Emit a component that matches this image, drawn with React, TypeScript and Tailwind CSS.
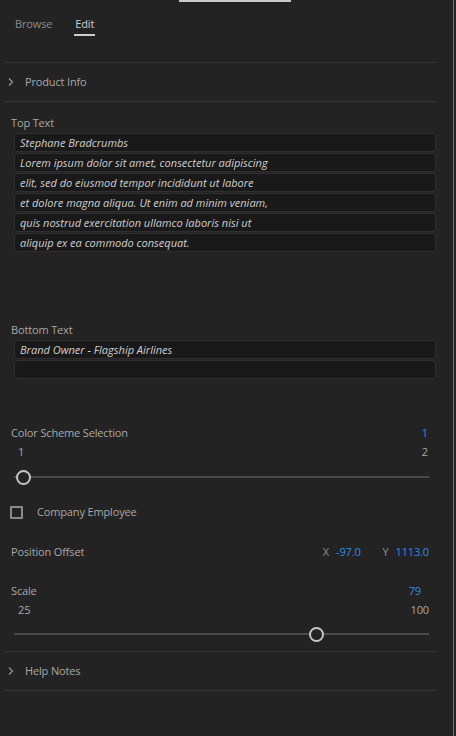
import React from 'react'

const TOP_LINES = [
  'Stephane Bradcrumbs',
  'Lorem ipsum dolor sit amet, consectetur adipiscing',
  'elit, sed do eiusmod tempor incididunt ut labore',
  'et dolore magna aliqua. Ut enim ad minim veniam,',
  'quis nostrud exercitation ullamco laboris nisi ut',
  'aliquip ex ea commodo consequat.',
]

const BOTTOM_LINES = ['Brand Owner - Flagship Airlines', '']

function Chevron() {
  return (
    <svg width="6" height="10" viewBox="0 0 6 10" className="shrink-0">
      <path d="M1 1.5 L4.5 5 L1 8.5" stroke="#9a9a9a" strokeWidth="1.1" fill="none" />
    </svg>
  )
}

function Section({ title }: { title: string }) {
  return (
    <div className="flex items-center h-[38px] pl-[8px] gap-[11px] text-[#a8a8a8]">
      <Chevron />
      <span>{title}</span>
    </div>
  )
}

function LineBox({ text }: { text: string }) {
  return (
    <div className="h-[19px] bg-[#191919] border border-[#2f2f2f] rounded-[3px] pl-[5px] flex items-center text-[11px] tracking-normal italic text-[#cfcfcf] leading-none">
      {text}
    </div>
  )
}

function Slider({ pct }: { pct: number }) {
  return (
    <div className="relative h-[18px] ml-[14px] mr-[27px] flex items-center">
      <div className="h-[2px] w-full bg-[#4a4a4a]" />
      <div
        className="absolute top-1/2 w-[15px] h-[15px] -mt-[7.5px] -ml-[7.5px] rounded-full border-[2px] border-[#c4c4c4] bg-[#232323]"
        style={{ left: `${pct}%` }}
      />
    </div>
  )
}

export default function App() {
  return (
    <div
      className="relative w-[456px] h-[736px] bg-[#232323] overflow-hidden text-[#a8a8a8] text-[11px] tracking-[-0.15px]"
      style={{ fontFamily: '"Open Sans", "Noto Sans", sans-serif' }}
    >
      <div className="absolute top-0 left-[179px] w-[112px] h-[2px] bg-[#c8c8c8]" />
      <div className="absolute top-0 right-[2px] w-[1px] h-full bg-[#3d7fd6]" />

      {/* tabs */}
      <div className="flex gap-[23px] pl-[15px] pt-[16px] h-[62px] leading-[16px]">
        <span className="text-[#8c8c8c]">Browse</span>
        <div className="flex flex-col">
          <span className="text-[#cfcfcf]">Edit</span>
          <div className="h-[2px] bg-[#cfcfcf] mt-[2px] -mx-[1px]" />
        </div>
      </div>

      <div className="ml-[4px] mr-[19px] border-t border-[#333333]" />
      <Section title="Product Info" />
      <div className="ml-[4px] mr-[19px] border-t border-[#333333]" />

      {/* top text */}
      <div className="pl-[11px] pt-[13px] leading-[16px]">Top Text</div>
      <div className="flex flex-col gap-[1px] ml-[14px] mr-[20px] mt-[2px]">
        {TOP_LINES.map((l, i) => (
          <LineBox key={i} text={l} />
        ))}
      </div>

      {/* bottom text */}
      <div className="pl-[11px] pt-[70px] leading-[16px]">Bottom Text</div>
      <div className="flex flex-col gap-[1px] ml-[14px] mr-[20px] mt-[2px]">
        {BOTTOM_LINES.map((l, i) => (
          <LineBox key={i} text={l} />
        ))}
      </div>

      {/* color scheme */}
      <div className="flex justify-between pl-[11px] pr-[28px] pt-[46px] leading-[16px]">
        <span>Color Scheme Selection</span>
        <span className="text-[#2f8ae8]">1</span>
      </div>
      <div className="flex justify-between pl-[18px] pr-[28px] pt-[3px] leading-[16px]">
        <span>1</span>
        <span>2</span>
      </div>
      <div className="mt-[8px]">
        <Slider pct={2.2} />
      </div>

      {/* checkbox */}
      <div className="flex items-center gap-[14px] pl-[10px] mt-[18px] leading-[16px]">
        <div className="w-[13px] h-[13px] border-[2px] border-[#8a8a8a] rounded-[1px]" />
        <span>Company Employee</span>
      </div>

      {/* position */}
      <div className="flex items-center pl-[11px] pr-[27px] mt-[24px] leading-[16px]">
        <span className="flex-1">Position Offset</span>
        <span className="text-[#8c8c8c]">X</span>
        <span className="text-[#2f8ae8] ml-[7px]">-97.0</span>
        <span className="text-[#8c8c8c] ml-[22px]">Y</span>
        <span className="text-[#2f8ae8] ml-[7px]">1113.0</span>
      </div>

      {/* scale */}
      <div className="flex justify-between pl-[11px] pr-[27px] pt-[23px] leading-[16px]">
        <span>Scale</span>
        <span className="text-[#2f8ae8] pr-[8px]">79</span>
      </div>
      <div className="flex justify-between pl-[18px] pr-[27px] pt-[3px] leading-[16px]">
        <span>25</span>
        <span>100</span>
      </div>
      <div className="mt-[7px]">
        <Slider pct={72.8} />
      </div>

      <div className="ml-[4px] mr-[19px] mt-[8px] border-t border-[#333333]" />
      <Section title="Help Notes" />
      <div className="ml-[4px] mr-[19px] border-t border-[#333333]" />
    </div>
  )
}
